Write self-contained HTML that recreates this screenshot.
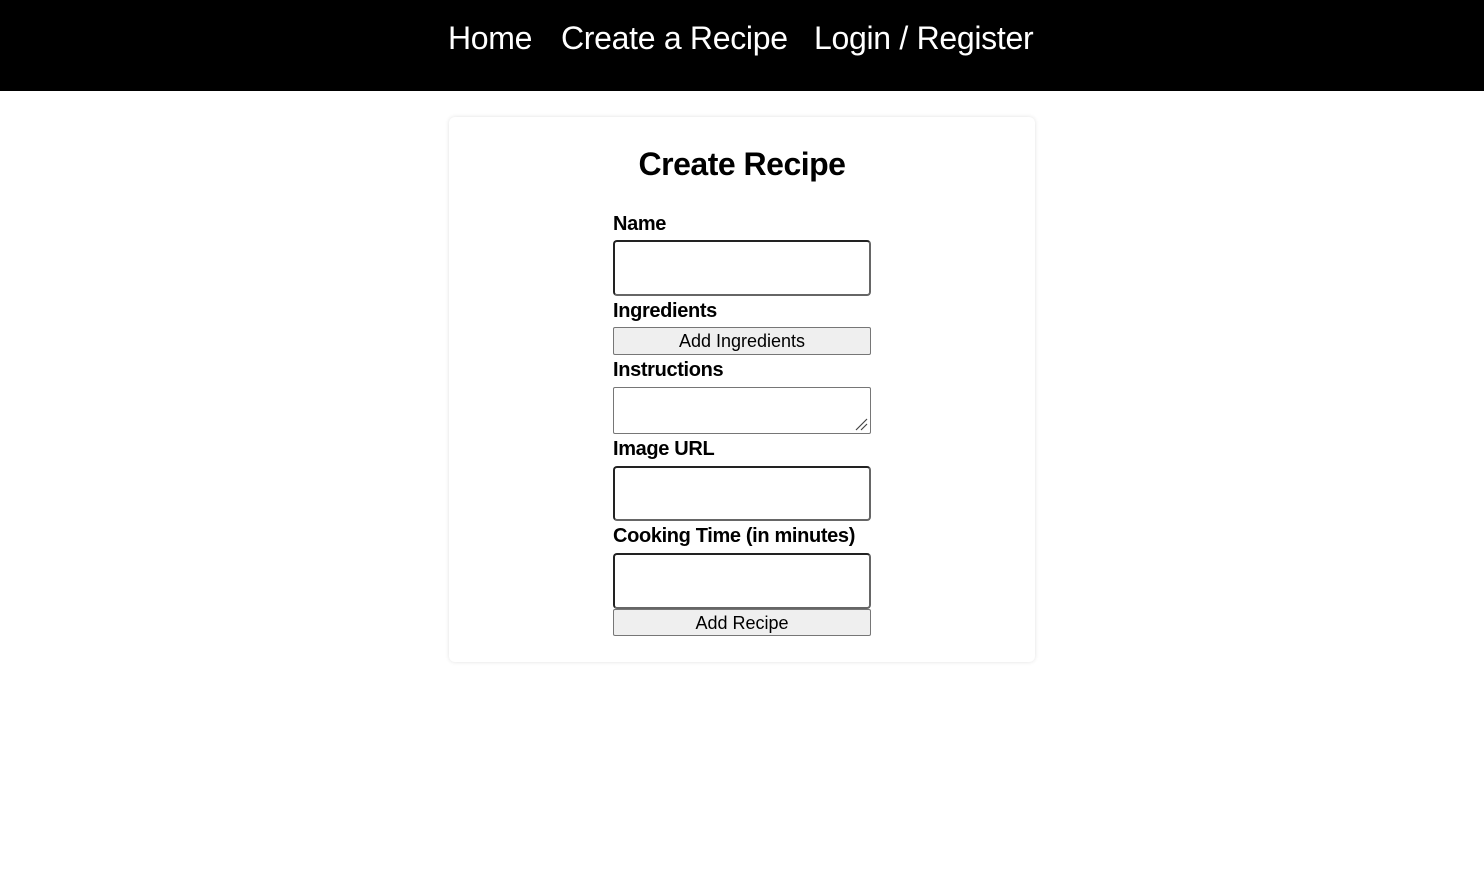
<!DOCTYPE html>
<html><head><meta charset="utf-8"><style>
*{margin:0;padding:0;box-sizing:border-box}
body{width:1484px;height:896px;background:#fff;font-family:"Liberation Sans",sans-serif;position:relative;overflow:hidden;color:#000}
.nav{position:absolute;left:0;top:0;width:1484px;height:91px;background:#000}
.nav span{position:absolute;top:18px;color:#fff;font-size:32px;line-height:40px;white-space:nowrap;letter-spacing:-0.3px}
.card{position:absolute;left:449px;top:117px;width:586px;height:545px;border-radius:6px;box-shadow:0 0 4px rgba(0,0,0,0.12)}
.t{position:absolute;left:0;width:1484px;text-align:center;top:144px;font-size:32px;font-weight:bold;line-height:40px;letter-spacing:-0.5px}
.l{position:absolute;left:613px;font-size:20px;font-weight:bold;line-height:24px;letter-spacing:-0.35px;white-space:nowrap}
.in{position:absolute;left:613px;width:258px;border:2px solid #222;border-right-color:#666;border-bottom-color:#666;border-radius:4px}
.b{position:absolute;left:613px;width:258px;background:#efefef;border:1px solid #767676;border-radius:2px;font-size:18px;text-align:center;line-height:26px}
.ta{position:absolute;left:613px;top:387px;width:258px;height:47px;border:1px solid #767676;border-radius:2px}
</style></head><body>
<div class="nav"><span style="left:448px">Home</span><span style="left:561px">Create a Recipe</span><span style="left:814px">Login / Register</span></div>
<div class="card"></div>
<div class="t">Create Recipe</div>
<div class="l" style="top:212px">Name</div>
<div class="in" style="top:240px;height:56px"></div>
<div class="l" style="top:299px">Ingredients</div>
<div class="b" style="top:327px;height:28px">Add Ingredients</div>
<div class="l" style="top:358px">Instructions</div>
<div class="ta"><svg width="14" height="14" style="position:absolute;right:2px;bottom:2px" viewBox="0 0 14 14"><path d="M2 13L13 2M7 13L13 7" stroke="#444" stroke-width="1.2"/></svg></div>
<div class="l" style="top:437px">Image URL</div>
<div class="in" style="top:466px;height:55px"></div>
<div class="l" style="top:524px">Cooking Time (in minutes)</div>
<div class="in" style="top:553px;height:56px"></div>
<div class="b" style="top:609px;height:27px">Add Recipe</div>
</body></html>
